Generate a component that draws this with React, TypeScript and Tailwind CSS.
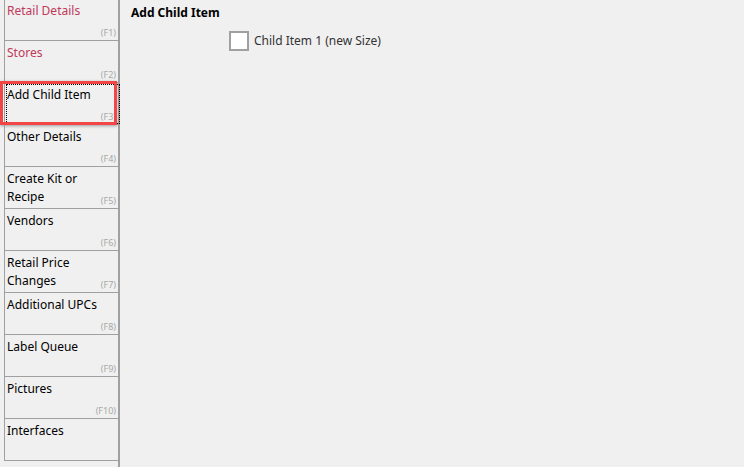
import React from 'react';

const items = [
    { label: 'Retail Details', key: 'F1', red: true },
    { label: 'Stores', key: 'F2', red: true },
    { label: 'Add Child Item', key: 'F3', active: true },
    { label: 'Other Details', key: 'F4' },
    { label: 'Create Kit or Recipe', key: 'F5' },
    { label: 'Vendors', key: 'F6' },
    { label: 'Retail Price Changes', key: 'F7' },
    { label: 'Additional UPCs', key: 'F8' },
    { label: 'Label Queue', key: 'F9' },
    { label: 'Pictures', key: 'F10' },
    { label: 'Interfaces', key: '' },
];

export default function App() {
    return (
        <div
            className="flex w-[744px] h-[467px] overflow-hidden bg-[#f0f0f0] text-[12px]"
            style={{ fontFamily: '"Noto Sans", "Open Sans", sans-serif' }}
        >
            <div className="w-[120px] shrink-0 h-full pl-[4px] border-r-2 border-[#a0a0a0]">
                <div className="-mt-px">
                    {items.map((it) => (
                        <div
                            key={it.label}
                            className="relative h-[42px] border-l border-b border-[#a0a0a0] pl-[2px] pr-[20px] pt-[3px] leading-[18px]"
                        >
                            <span className={it.red ? 'text-[#c0385a]' : 'text-black'}>{it.label}</span>
                            {it.key && (
                                <span className="absolute right-[2px] bottom-[1px] text-[9px] leading-[12px] text-[#a8a8a8]">
                                    ({it.key})
                                </span>
                            )}
                            {it.active && (
                                <>
                                    <div className="absolute left-px top-px right-[-2px] bottom-0 border border-dotted border-black" />
                                    <div className="absolute left-[-5px] top-[-2px] w-[117px] h-[44px] border-[3px] border-[#f24545] shadow-[0_1px_3px_rgba(0,0,0,0.35)]" />
                                </>
                            )}
                        </div>
                    ))}
                </div>
            </div>
            <div className="flex-1 pl-[11px] pt-[4px]">
                <div className="font-bold text-black leading-[18px]">Add Child Item</div>
                <label className="mt-[9px] ml-[98px] flex items-center gap-[5px]">
                    <span className="w-[20px] h-[20px] bg-white border-2 border-[#a0a0a0]" />
                    <span className="text-[#333]">Child Item 1 (new Size)</span>
                </label>
            </div>
        </div>
    );
}
